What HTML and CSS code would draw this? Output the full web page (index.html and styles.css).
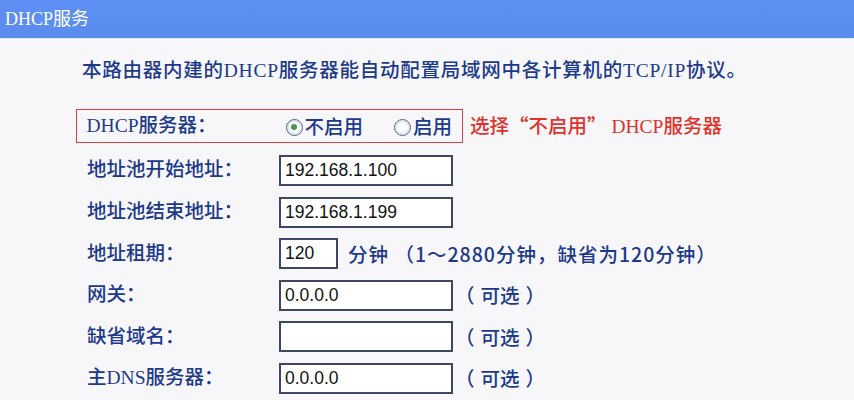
FILE: index.html
```html
<!DOCTYPE html>
<html lang="zh-CN">
<head>
<meta charset="utf-8">
<title>DHCP服务</title>
<link rel="stylesheet" href="styles.css">
</head>
<body>
<header class="bar"><h1 class="bar-title">DHCP服务</h1></header>
<main class="content">
  <p class="intro">本路由器内建的DHCP服务器能自动配置局域网中各计算机的TCP/IP协议。</p>
  <div class="form">
    <div class="row row-top">
      <div class="highlight">
        <span class="label">DHCP服务器：</span>
        <span class="radios">
          <span class="radio checked"></span><span class="radio-text">不启用</span>
          <span class="radio radio-gap"></span><span class="radio-text">启用</span>
        </span>
      </div>
      <span class="note-red">选择<span class="quote">“</span>不启用<span class="quote">”</span> DHCP服务器</span>
    </div>
    <div class="row">
      <span class="label">地址池开始地址：</span>
      <span class="input wide">192.168.1.100</span>
    </div>
    <div class="row">
      <span class="label">地址池结束地址：</span>
      <span class="input wide">192.168.1.199</span>
    </div>
    <div class="row">
      <span class="label">地址租期：</span>
      <span class="input short">120</span>
      <span class="hint">分钟 （1～2880分钟，缺省为120分钟）</span>
    </div>
    <div class="row">
      <span class="label">网关：</span>
      <span class="input wide">0.0.0.0</span>
      <span class="opt">（<span class="tight">可</span>选）</span>
    </div>
    <div class="row">
      <span class="label">缺省域名：</span>
      <span class="input wide"></span>
      <span class="opt">（<span class="tight">可</span>选）</span>
    </div>
    <div class="row">
      <span class="label">主DNS服务器：</span>
      <span class="input wide">0.0.0.0</span>
      <span class="opt">（<span class="tight">可</span>选）</span>
    </div>
  </div>
</main>
</body>
</html>
```
FILE: styles.css
```css
html, body {
  margin: 0;
  padding: 0;
}
body {
  width: 854px;
  height: 400px;
  overflow: hidden;
  background: #f7f7f9;
  font-family: "Liberation Serif", "Noto Sans CJK SC", sans-serif;
  color: #1d3a8a;
}
.bar {
  height: 38px;
  background: linear-gradient(#5e8ff2, #5a8cee);
  border-bottom: 1px solid #dfeef6;
  display: flex;
  align-items: center;
  padding-left: 5px;
}
.bar-title {
  margin: 0;
  font-size: 18px;
  font-weight: 400;
  color: #ffffff;
  line-height: 20px;
}
.content {
  padding-left: 76px;
}
.intro {
  margin: 20px 0 0 6px;
  font-size: 19.5px;
  line-height: 24px;
  letter-spacing: 0.75px;
  font-weight: 500;
}
.form {
  margin-top: 26px;
  display: flex;
  flex-direction: column;
  gap: 10.6px;
}
.row {
  display: flex;
  align-items: center;
  height: 31px;
  padding-left: 11px;
}
.row-top {
  height: 34px;
  padding-left: 0;
  margin-bottom: 1.4px;
}
.highlight {
  box-sizing: border-box;
  height: 34px;
  width: 387px;
  border: 1.5px solid #cf4545;
  display: flex;
  align-items: center;
  padding-left: 9.5px;
}
.label {
  width: 192px;
  flex: none;
  font-size: 19.5px;
  line-height: 24px;
  font-weight: 500;
}
.radios {
  display: flex;
  align-items: center;
  margin-left: 7px;
}
.radio {
  box-sizing: border-box;
  width: 17px;
  height: 17px;
  flex: none;
  border-radius: 50%;
  border: 1.5px solid #56677f;
  background: #ffffff;
  box-shadow: inset 0 0 0 2px #e2e7ee;
  display: flex;
  align-items: center;
  justify-content: center;
  margin-top: 2px;
}
.radio.checked::after {
  content: "";
  width: 6px;
  height: 6px;
  border-radius: 50%;
  background: #3f9c47;
}
.radio-gap {
  margin-left: 31px;
}
.radio-text {
  margin-left: 2px;
  font-family: "Noto Sans CJK SC", sans-serif;
  font-size: 19.5px;
  line-height: 24px;
  color: #1d3a8a;
  font-weight: 500;
}
.note-red {
  margin-left: 7px;
  font-size: 19.5px;
  line-height: 24px;
  color: #e2302a;
  font-weight: 500;
  white-space: nowrap;
}
.quote {
  font-family: "Noto Sans CJK SC", sans-serif;
  font-weight: 700;
}
.input {
  box-sizing: border-box;
  height: 31px;
  flex: none;
  background: #ffffff;
  border: 2px solid #3e4862;
  display: flex;
  align-items: center;
  padding-left: 4px;
  font-family: "Liberation Sans", sans-serif;
  font-size: 17.5px;
  color: #111111;
}
.wide {
  width: 174px;
}
.short {
  width: 59px;
}
.hint {
  margin-left: 10px;
  font-family: "Noto Sans CJK SC", sans-serif;
  font-size: 19.5px;
  line-height: 24px;
  letter-spacing: 1px;
  font-weight: 500;
  white-space: nowrap;
}
.opt {
  margin-left: 2px;
  font-family: "Noto Sans CJK SC", sans-serif;
  font-size: 19.5px;
  line-height: 24px;
  letter-spacing: 6px;
  font-weight: 500;
}
.tight {
  letter-spacing: 0;
}
```
